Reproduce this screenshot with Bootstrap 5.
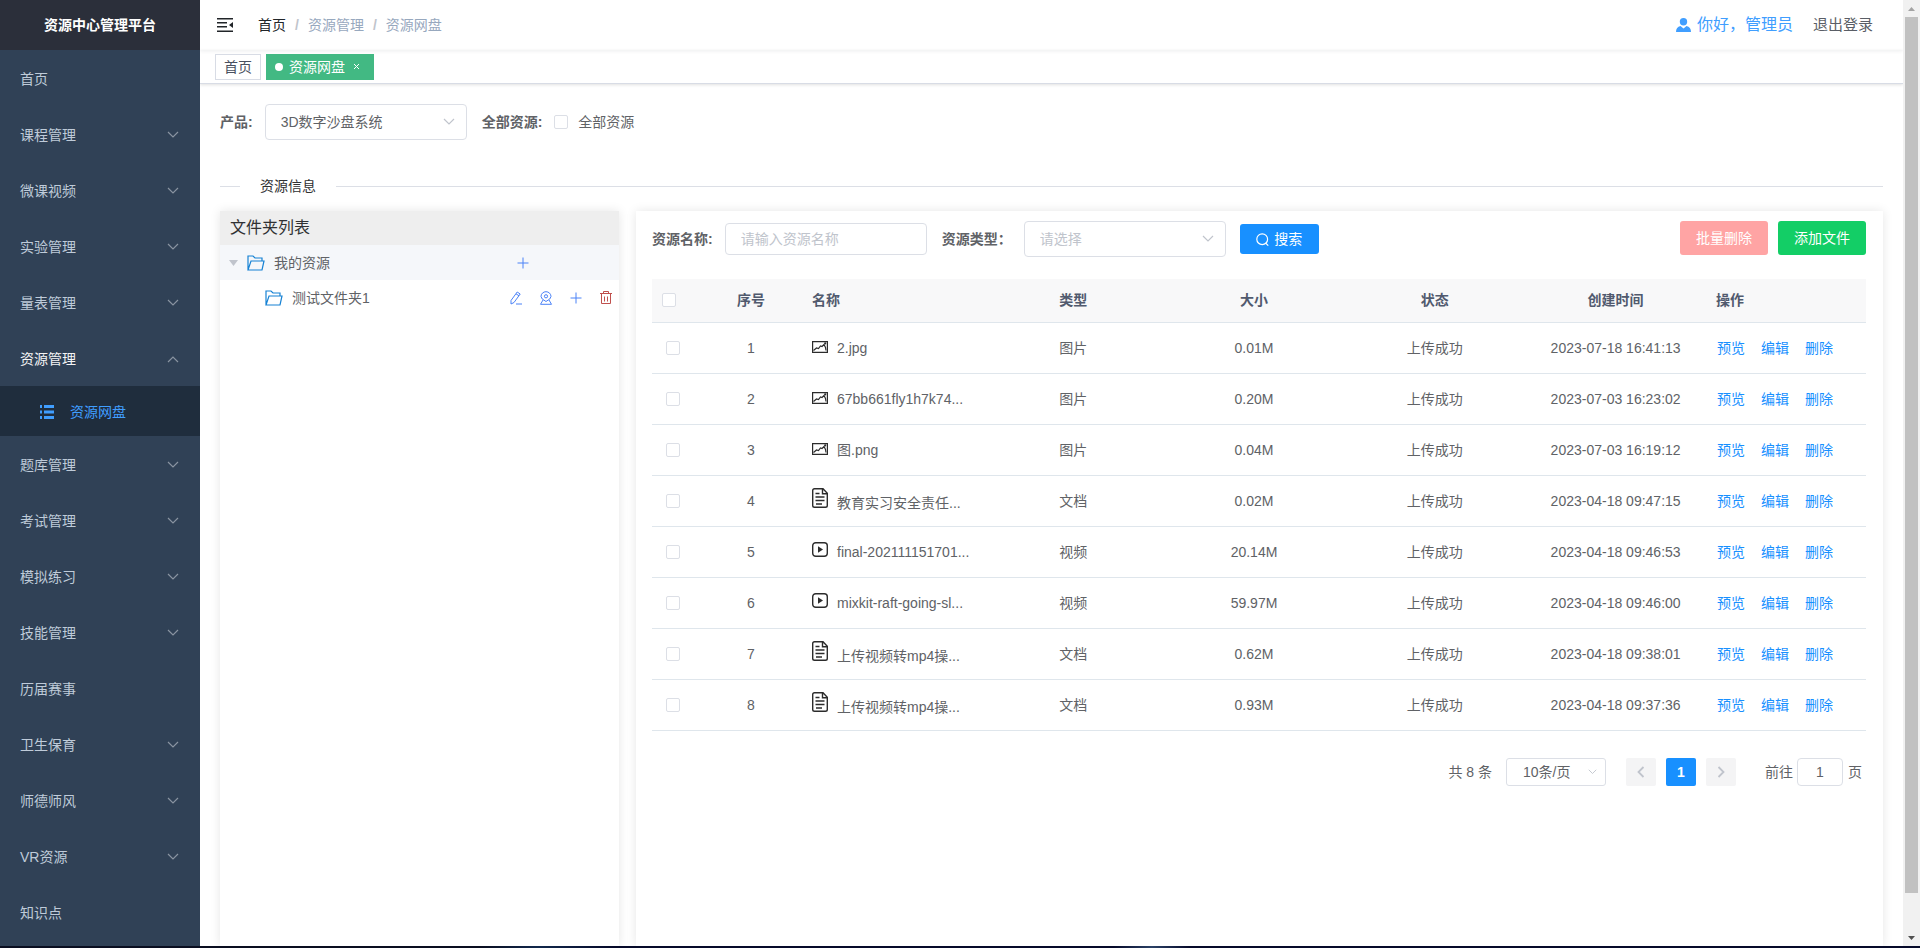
<!DOCTYPE html>
<html lang="zh-CN">
<head>
<meta charset="utf-8">
<meta name="viewport" content="width=device-width, initial-scale=1">
<title>资源中心管理平台</title>
<link href="https://cdn.jsdelivr.net/npm/bootstrap@5.3.0/dist/css/bootstrap.min.css" rel="stylesheet">
<style>
  body { font: 14px/20px "Liberation Sans", "Noto Sans CJK SC", sans-serif; color: #606266; background: #fff; }
  a { text-decoration: none; color: inherit; }
  svg { display: block; flex: none; }
  .w-side { width: 200px; }

  /* sidebar */
  .side { background: #304156; color: #bfcbd9; }
  .side-logo { height: 50px; background: #2b2f3a; }
  .side-item { height: 56px; padding: 1px 21px 0 20px; }
  .side-item.open { color: #f4f4f5; }
  .side-item svg { color: #8a94a1; }
  .side-sub { height: 50px; padding: 1px 20px 0 40px; gap: 16px; background: #1f2d3d; color: #409eff; }

  /* top bars */
  .topbar { height: 50px; padding: 0 30px 0 17px; box-shadow: 0 1px 4px rgba(0,21,41,.08); }
  .crumb { --bs-breadcrumb-item-padding-x: 9px; --bs-breadcrumb-divider-color: #c0c4cc; margin-left: 25px; color: #97a8be; }
  .crumb .breadcrumb-item + .breadcrumb-item::before { font-weight: 700; }
  .user-name { font-size: 16px; color: #409eff; gap: 6px; }
  .logout { font-size: 15px; margin-left: 20px; color: #5a5e66; }
  .tagbar { height: 34px; padding: 0 15px; gap: 5px; border-bottom: 1px solid #d8dce5; box-shadow: 0 1px 3px rgba(0,0,0,.12); }
  .tag-item { height: 26px; padding: 0 8px; border: 1px solid #d8dce5; color: #495060; }
  .tag-item.on { background: #42b983; border-color: #42b983; color: #fff; padding-right: 13px; }
  .dot { width: 8px; height: 8px; border-radius: 50%; background: #fff; margin-right: 6px; }
  .tag-close { border: 0; background: none; color: #fff; padding: 0; margin-left: 8px; }

  /* form controls */
  .page { padding: 20px 20px 0; }
  .field-row { gap: 12px; }
  .field-row + .field-row { margin-left: 15px; }
  .field-label { font-weight: 700; }
  .ctl { width: 202px; height: 32px; padding: 0 15px; font-size: 14px; line-height: 20px; color: #606266; border: 1px solid #dcdfe6; border-radius: 4px; }
  .ctl::placeholder { color: #c0c4cc; }
  select.ctl { height: 36px; background: #fff url("data:image/svg+xml,%3Csvg xmlns='http://www.w3.org/2000/svg' width='12' height='8' fill='none' stroke='%23c0c4cc' stroke-width='1.2'%3E%3Cpath d='M1 1l5 5 5-5'/%3E%3C/svg%3E") no-repeat right 11px center; background-size: 12px 8px; }
  select.ctl.hint { color: #c0c4cc; }
  select.ctl.pager-size { width: 100px; height: 28px; margin: 0 20px 0 14px; padding: 0 16px; background-size: 9px 6px; background-position: right 8px center; border-radius: 3px; }
  .ctl.pager-jump { width: 46px; height: 28px; margin: 0 5px 0 4px; padding: 0 3px; text-align: center; }
  .box.form-check-input { width: 14px; height: 14px; margin: 0; border: 1px solid #dcdfe6; border-radius: 2px; display: block; }
  .check-row { gap: 10px; }
  .rule { height: 1px; background: #dcdfe6; }
  .rule-start { width: 20px; }
  .section-title { margin: 36px 0 15px; gap: 20px; color: #303133; }

  /* panels */
  .panels { gap: 17px; }
  .panel { background: #fff; box-shadow: 0 0 10px rgba(0,0,0,.1); }
  .tree { flex: 0 0 399px; }
  .tree-head { height: 34px; padding: 0 10px; font-size: 16px; background: #eee; color: #303133; }
  .tree-row { height: 35px; padding: 0 6px 0 9px; gap: 9px; }
  .tree-row.on { background: #f5f7fa; padding-right: 89px; }
  .tree-row.child { padding-left: 45px; }
  .icon-btn { border: 0; background: none; padding: 0; color: #4b82f7; }
  .icon-btn.trash { color: #c0504d; }
  .files { padding: 10px 17px 0 16px; }
  .filters { height: 36px; }

  .btn-flat { font-size: 14px; line-height: 20px; border: 0; border-radius: 3px; color: #fff; }
  .btn-flat:hover { color: #fff; }
  .btn-find { width: 79px; height: 30px; margin-left: 14px; background: #1890ff; padding: 0; gap: 5px; }
  .acts { gap: 10px; }
  .btn-act { width: 88px; height: 34px; padding: 0; }
  .btn-del { background: #ffa4a4; }
  .btn-add { background: #13ce66; }

  .grid-table { table-layout: fixed; margin: 22px 0 0; color: #606266; }
  .grid-table > :not(caption) > * > * { padding: 0 10px; vertical-align: middle; border-bottom: 1px solid #dfe6ec; color: inherit; }
  .grid-table thead th { height: 43px; background: #f8f8f9; color: #515a6e; font-weight: 700; }
  .grid-table tbody td { height: 51px; }
  .grid-table > tbody > tr > td:first-child { padding-left: 14px; }
  .grid-table > tbody > tr > td.ops { padding-left: 11px; }
  .col-check { width: 48px; }
  .col-no { width: 102px; }
  .col-ops { width: 160px; }
  .fname svg { display: inline; vertical-align: baseline; margin-right: 9px; color: #2c2c2c; }
  .ops a { color: #1890ff; margin-right: 16px; }

  .pager { margin-top: 27px; padding-right: 4px; }
  .pg-list { gap: 10px; margin-right: 29px; }
  .pg { width: 30px; height: 28px; border: 0; border-radius: 2px; background: #f4f4f5; color: #c0c4cc; padding: 0; }
  .pg.on { background: #1890ff; color: #fff; font-weight: 700; }

  .scroller { width: 17px; background: #f1f1f1; }
  .scroller-end { height: 17px; }
  .scroller-thumb { flex: 96 1 0; margin: 0 2px; background: #c1c1c1; }
  .scroller-rest { flex: 4 1 0; }
  .bottom-edge { height: 2px; background: linear-gradient(90deg, #0a0e20 0 25%, #11284c 28%, #060a2a 32% 58%, #2b4166 60%, #060a2a 62%); }
</style>
</head>
<body class="vh-100 d-flex flex-column overflow-hidden">

<svg width="0" height="0" class="position-absolute" aria-hidden="true">
  <symbol id="down" viewBox="0 0 12 8"><path d="M1 1l5 5 5-5" fill="none" stroke="currentColor" stroke-width="1.2"/></symbol>
  <symbol id="up" viewBox="0 0 12 8"><path d="M1 7l5-5 5 5" fill="none" stroke="currentColor" stroke-width="1.2"/></symbol>
  <symbol id="folder" viewBox="0 0 18 16"><path d="M1 15V1h5l2 2h7v3M1 15L4 6h13l-2 9z" fill="none" stroke="#1682d4" stroke-width="1.2"/></symbol>
  <symbol id="plus" viewBox="0 0 14 14"><path d="M7 1.500v11M1.500 7h11" stroke="currentColor" stroke-width="1"/></symbol>
  <symbol id="pic" viewBox="0 0 16 12"><path d="M.6.600h14.800v10.800H.6z" fill="none" stroke="currentColor" stroke-width="1.200"/><path d="M1.500 9.500l3-2.500 2 .5 2-2.500 1.500.5 2-2 1.500 3 .5 3" fill="none" stroke="currentColor" stroke-width="1.200"/><circle cx="13.200" cy="2.400" r="1.100" fill="currentColor"/></symbol>
  <symbol id="doc" viewBox="0 0 16 20"><path d="M11 .7H2.500Q.7.700.7 2.500v15q0 1.800 1.800 1.800h11q1.800 0 1.800-1.800V5.200zM10.500.7v5h4.800" fill="none" stroke="currentColor" stroke-width="1.400"/><path d="M3.500 5.500h4M3.500 9h9M3.500 12.500h9M4 16h6" stroke="currentColor" stroke-width="1.300"/></symbol>
  <symbol id="vid" viewBox="0 0 16 15"><rect x=".7" y=".7" width="14.600" height="13.600" rx="3" fill="none" stroke="currentColor" stroke-width="1.400"/><path d="M6 4.200v6.600l5-3.300z" fill="currentColor"/></symbol>
</svg>

<div class="d-flex flex-grow-1 overflow-hidden">

  <aside class="side w-side flex-shrink-0 overflow-hidden">
    <div class="side-logo d-flex align-items-center justify-content-center fw-bold text-white">资源中心管理平台</div>
    <nav aria-label="主菜单">
      <a href="#" class="side-item d-flex align-items-center justify-content-between">首页</a>
      <a href="#" class="side-item d-flex align-items-center justify-content-between">课程管理<svg width="12" height="8"><use href="#down"/></svg></a>
      <a href="#" class="side-item d-flex align-items-center justify-content-between">微课视频<svg width="12" height="8"><use href="#down"/></svg></a>
      <a href="#" class="side-item d-flex align-items-center justify-content-between">实验管理<svg width="12" height="8"><use href="#down"/></svg></a>
      <a href="#" class="side-item d-flex align-items-center justify-content-between">量表管理<svg width="12" height="8"><use href="#down"/></svg></a>
      <a href="#" class="side-item open d-flex align-items-center justify-content-between">资源管理<svg width="12" height="8"><use href="#up"/></svg></a>
      <a href="#" class="side-sub d-flex align-items-center"><svg width="14" height="14" viewBox="0 0 14 14" fill="currentColor"><path d="M0 0h2v3H0zM4 0h10v3H4zM0 5.500h2v3H0zM4 5.500h10v3H4zM0 11h2v3H0zM4 11h10v3H4z"/></svg>资源网盘</a>
      <a href="#" class="side-item d-flex align-items-center justify-content-between">题库管理<svg width="12" height="8"><use href="#down"/></svg></a>
      <a href="#" class="side-item d-flex align-items-center justify-content-between">考试管理<svg width="12" height="8"><use href="#down"/></svg></a>
      <a href="#" class="side-item d-flex align-items-center justify-content-between">模拟练习<svg width="12" height="8"><use href="#down"/></svg></a>
      <a href="#" class="side-item d-flex align-items-center justify-content-between">技能管理<svg width="12" height="8"><use href="#down"/></svg></a>
      <a href="#" class="side-item d-flex align-items-center justify-content-between">历届赛事</a>
      <a href="#" class="side-item d-flex align-items-center justify-content-between">卫生保育<svg width="12" height="8"><use href="#down"/></svg></a>
      <a href="#" class="side-item d-flex align-items-center justify-content-between">师德师风<svg width="12" height="8"><use href="#down"/></svg></a>
      <a href="#" class="side-item d-flex align-items-center justify-content-between">VR资源<svg width="12" height="8"><use href="#down"/></svg></a>
      <a href="#" class="side-item d-flex align-items-center justify-content-between">知识点</a>
    </nav>
  </aside>

  <div class="flex-grow-1 d-flex flex-column overflow-hidden">
    <header class="topbar d-flex align-items-center flex-shrink-0">
      <button type="button" class="icon-btn text-dark" aria-label="折叠菜单"><svg width="16" height="14" viewBox="0 0 16 14" fill="currentColor"><path d="M0 0h16v1.600H0zM0 4h10v1.600H0zM0 8h10v1.600H0zM0 12.400h16V14H0zM16 4v6l-4-3z"/></svg></button>
      <nav aria-label="breadcrumb">
        <ol class="breadcrumb crumb mb-0">
          <li class="breadcrumb-item"><a href="#" class="text-dark">首页</a></li>
          <li class="breadcrumb-item">资源管理</li>
          <li class="breadcrumb-item">资源网盘</li>
        </ol>
      </nav>
      <div class="ms-auto user-name d-flex align-items-center">
        <svg width="15" height="14" viewBox="0 0 15 14" fill="currentColor"><circle cx="7.500" cy="3.700" r="3.700"/><path d="M0 14q0-5 4.500-6l3 2.500 3-2.500Q15 9 15 14z"/></svg>
        <span>你好，管理员</span>
      </div>
      <a href="#" class="logout">退出登录</a>
    </header>

    <div class="tagbar d-flex align-items-center flex-shrink-0">
      <a href="#" class="tag-item d-flex align-items-center">首页</a>
      <div class="tag-item on d-flex align-items-center"><span class="dot"></span><a href="#">资源网盘</a>
        <button type="button" class="tag-close" aria-label="关闭"><svg width="7" height="7" viewBox="0 0 7 7"><path d="M1 1l5 5M6 1L1 6" stroke="currentColor"/></svg></button>
      </div>
    </div>

    <main class="page flex-grow-1 d-flex flex-column">
      <div class="d-flex align-items-center">
        <div class="field-row d-flex align-items-center">
          <label for="product" class="field-label">产品:</label>
          <select id="product" class="form-select ctl"><option>3D数字沙盘系统</option></select>
        </div>
        <div class="field-row d-flex align-items-center">
          <span class="field-label">全部资源:</span>
          <div class="check-row d-flex align-items-center">
            <input id="all" type="checkbox" class="form-check-input box">
            <label for="all">全部资源</label>
          </div>
        </div>
      </div>

      <div class="section-title d-flex align-items-center">
        <span class="rule rule-start"></span><span>资源信息</span><span class="rule flex-grow-1"></span>
      </div>

      <div class="panels d-flex flex-grow-1">
        <section class="panel tree">
          <div class="tree-head d-flex align-items-center">文件夹列表</div>
          <div class="tree-row on d-flex align-items-center">
            <svg width="9" height="6" viewBox="0 0 9 6"><path d="M0 0h9L4.500 6z" fill="#c0c4cc"/></svg>
            <svg width="18" height="16"><use href="#folder"/></svg>
            <span>我的资源</span>
            <button type="button" class="icon-btn ms-auto" aria-label="新建文件夹"><svg width="14" height="14"><use href="#plus"/></svg></button>
          </div>
          <div class="tree-row child d-flex align-items-center">
            <svg width="18" height="16"><use href="#folder"/></svg>
            <span>测试文件夹1</span>
            <div class="d-flex ms-auto gap-3">
              <button type="button" class="icon-btn" aria-label="编辑"><svg width="14" height="14" viewBox="0 0 14 14" fill="none" stroke="currentColor"><path d="M2 9.500L8.200 1l3 2L5 11.500 2 13zM7 2.800l3 2M7 13h6"/></svg></button>
              <button type="button" class="icon-btn" aria-label="定位"><svg width="14" height="14" viewBox="0 0 14 14" fill="none" stroke="currentColor"><path d="M7 10.500Q2 8 2 5.500a5 4.800 0 0 1 10 0Q12 8 7 10.500zM4 9l-2.500 4.300h11L10 9"/><circle cx="7" cy="5.300" r="1.600"/></svg></button>
              <button type="button" class="icon-btn" aria-label="新建"><svg width="14" height="14"><use href="#plus"/></svg></button>
              <button type="button" class="icon-btn trash" aria-label="删除"><svg width="14" height="14" viewBox="0 0 14 14" fill="none" stroke="currentColor"><path d="M1 2.500h12M4.500 2.500v-2h5v2M2.500 2.500v10h9v-10M5.500 5.500v5M8.500 5.500v5"/></svg></button>
            </div>
          </div>
        </section>

        <section class="panel files flex-grow-1">
          <div class="filters d-flex align-items-center">
            <div class="field-row d-flex align-items-center">
              <label for="fname" class="field-label">资源名称:</label>
              <input id="fname" type="text" class="form-control ctl" placeholder="请输入资源名称">
            </div>
            <div class="field-row d-flex align-items-center">
              <label for="ftype" class="field-label">资源类型：</label>
              <select id="ftype" class="form-select ctl hint"><option>请选择</option></select>
            </div>
            <button type="button" class="btn btn-flat btn-find d-flex align-items-center justify-content-center"><svg width="13" height="13" viewBox="0 0 13 13" fill="none" stroke="currentColor" stroke-width="1.200"><circle cx="6.200" cy="6.200" r="5.400"/><path d="M9.500 10l2.800 2.600"/></svg>搜索</button>
            <div class="acts d-flex align-self-start ms-auto">
              <button type="button" class="btn btn-flat btn-act btn-del">批量删除</button>
              <button type="button" class="btn btn-flat btn-act btn-add">添加文件</button>
            </div>
          </div>

          <table class="table grid-table">
            <colgroup><col class="col-check"><col class="col-no"><col><col><col><col><col><col class="col-ops"></colgroup>
            <thead>
              <tr><th><input type="checkbox" class="form-check-input box" aria-label="全选"></th><th class="text-center">序号</th><th>名称</th><th class="text-center">类型</th><th class="text-center">大小</th><th class="text-center">状态</th><th class="text-center">创建时间</th><th>操作</th></tr>
            </thead>
            <tbody>
              <tr><td><input type="checkbox" class="form-check-input box" aria-label="选择 1"></td><td class="text-center">1</td><td class="fname"><svg width="16" height="12"><use href="#pic"/></svg>2.jpg</td><td class="text-center">图片</td><td class="text-center">0.01M</td><td class="text-center">上传成功</td><td class="text-center">2023-07-18 16:41:13</td><td class="ops text-nowrap"><a href="#">预览</a><a href="#">编辑</a><a href="#" class="me-0">删除</a></td></tr>
              <tr><td><input type="checkbox" class="form-check-input box" aria-label="选择 2"></td><td class="text-center">2</td><td class="fname"><svg width="16" height="12"><use href="#pic"/></svg>67bb661fly1h7k74...</td><td class="text-center">图片</td><td class="text-center">0.20M</td><td class="text-center">上传成功</td><td class="text-center">2023-07-03 16:23:02</td><td class="ops text-nowrap"><a href="#">预览</a><a href="#">编辑</a><a href="#" class="me-0">删除</a></td></tr>
              <tr><td><input type="checkbox" class="form-check-input box" aria-label="选择 3"></td><td class="text-center">3</td><td class="fname"><svg width="16" height="12"><use href="#pic"/></svg>图.png</td><td class="text-center">图片</td><td class="text-center">0.04M</td><td class="text-center">上传成功</td><td class="text-center">2023-07-03 16:19:12</td><td class="ops text-nowrap"><a href="#">预览</a><a href="#">编辑</a><a href="#" class="me-0">删除</a></td></tr>
              <tr><td><input type="checkbox" class="form-check-input box" aria-label="选择 4"></td><td class="text-center">4</td><td class="fname"><svg width="16" height="20"><use href="#doc"/></svg>教育实习安全责任...</td><td class="text-center">文档</td><td class="text-center">0.02M</td><td class="text-center">上传成功</td><td class="text-center">2023-04-18 09:47:15</td><td class="ops text-nowrap"><a href="#">预览</a><a href="#">编辑</a><a href="#" class="me-0">删除</a></td></tr>
              <tr><td><input type="checkbox" class="form-check-input box" aria-label="选择 5"></td><td class="text-center">5</td><td class="fname"><svg width="16" height="15"><use href="#vid"/></svg>final-202111151701...</td><td class="text-center">视频</td><td class="text-center">20.14M</td><td class="text-center">上传成功</td><td class="text-center">2023-04-18 09:46:53</td><td class="ops text-nowrap"><a href="#">预览</a><a href="#">编辑</a><a href="#" class="me-0">删除</a></td></tr>
              <tr><td><input type="checkbox" class="form-check-input box" aria-label="选择 6"></td><td class="text-center">6</td><td class="fname"><svg width="16" height="15"><use href="#vid"/></svg>mixkit-raft-going-sl...</td><td class="text-center">视频</td><td class="text-center">59.97M</td><td class="text-center">上传成功</td><td class="text-center">2023-04-18 09:46:00</td><td class="ops text-nowrap"><a href="#">预览</a><a href="#">编辑</a><a href="#" class="me-0">删除</a></td></tr>
              <tr><td><input type="checkbox" class="form-check-input box" aria-label="选择 7"></td><td class="text-center">7</td><td class="fname"><svg width="16" height="20"><use href="#doc"/></svg>上传视频转mp4操...</td><td class="text-center">文档</td><td class="text-center">0.62M</td><td class="text-center">上传成功</td><td class="text-center">2023-04-18 09:38:01</td><td class="ops text-nowrap"><a href="#">预览</a><a href="#">编辑</a><a href="#" class="me-0">删除</a></td></tr>
              <tr><td><input type="checkbox" class="form-check-input box" aria-label="选择 8"></td><td class="text-center">8</td><td class="fname"><svg width="16" height="20"><use href="#doc"/></svg>上传视频转mp4操...</td><td class="text-center">文档</td><td class="text-center">0.93M</td><td class="text-center">上传成功</td><td class="text-center">2023-04-18 09:37:36</td><td class="ops text-nowrap"><a href="#">预览</a><a href="#">编辑</a><a href="#" class="me-0">删除</a></td></tr>
            </tbody>
          </table>

          <div class="pager d-flex align-items-center justify-content-end">
            <span>共 8 条</span>
            <select class="form-select ctl pager-size" aria-label="每页条数"><option>10条/页</option></select>
            <div class="pg-list d-flex">
              <button type="button" class="pg d-flex align-items-center justify-content-center" aria-label="上一页"><svg width="8" height="12" viewBox="0 0 8 12"><path d="M6.500 1l-5 5 5 5" fill="none" stroke="currentColor" stroke-width="1.800"/></svg></button>
              <button type="button" class="pg on">1</button>
              <button type="button" class="pg d-flex align-items-center justify-content-center" aria-label="下一页"><svg width="8" height="12" viewBox="0 0 8 12"><path d="M1.500 1l5 5-5 5" fill="none" stroke="currentColor" stroke-width="1.800"/></svg></button>
            </div>
            <label for="jump">前往</label>
            <input id="jump" type="text" class="form-control ctl pager-jump" value="1">
            <span>页</span>
          </div>
        </section>
      </div>
    </main>
  </div>

  <div class="scroller flex-shrink-0 d-flex flex-column" aria-hidden="true">
    <div class="scroller-end d-flex align-items-center justify-content-center"><svg width="7" height="4" viewBox="0 0 7 4"><path d="M0 4h7L3.500 0z" fill="#a3a3a3"/></svg></div>
    <div class="scroller-thumb"></div>
    <div class="scroller-rest"></div>
    <div class="scroller-end d-flex align-items-center justify-content-center"><svg width="7" height="4" viewBox="0 0 7 4"><path d="M0 0h7L3.500 4z" fill="#505050"/></svg></div>
  </div>
</div>
<div class="bottom-edge flex-shrink-0"></div>

<script src="https://cdn.jsdelivr.net/npm/bootstrap@5.3.0/dist/js/bootstrap.bundle.min.js"></script>
</body>
</html>
